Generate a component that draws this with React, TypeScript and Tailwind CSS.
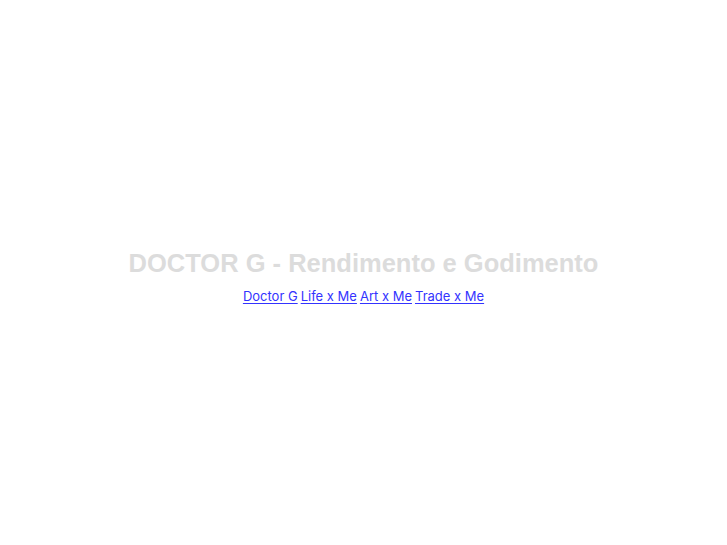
import React from 'react';

export default function App() {
  const links = ['Doctor G', 'Life x Me', 'Art x Me', 'Trade x Me'];
  return (
    <div className="h-[545px] w-full bg-white flex flex-col items-center pt-[247px]">
      <h1 className="font-['Liberation_Sans',Arial,sans-serif] font-bold text-[25.5px] leading-[32px] text-[#dcdcdc]">
        DOCTOR G - Rendimento e Godimento
      </h1>
      <div className="mt-[8px] font-['Inter',sans-serif] text-[13px] leading-[18px] flex gap-[3px]">
        {links.map((l) => (
          <a key={l} href="#" className="text-[#3333ff] underline underline-offset-2">
            {l}
          </a>
        ))}
      </div>
    </div>
  );
}
